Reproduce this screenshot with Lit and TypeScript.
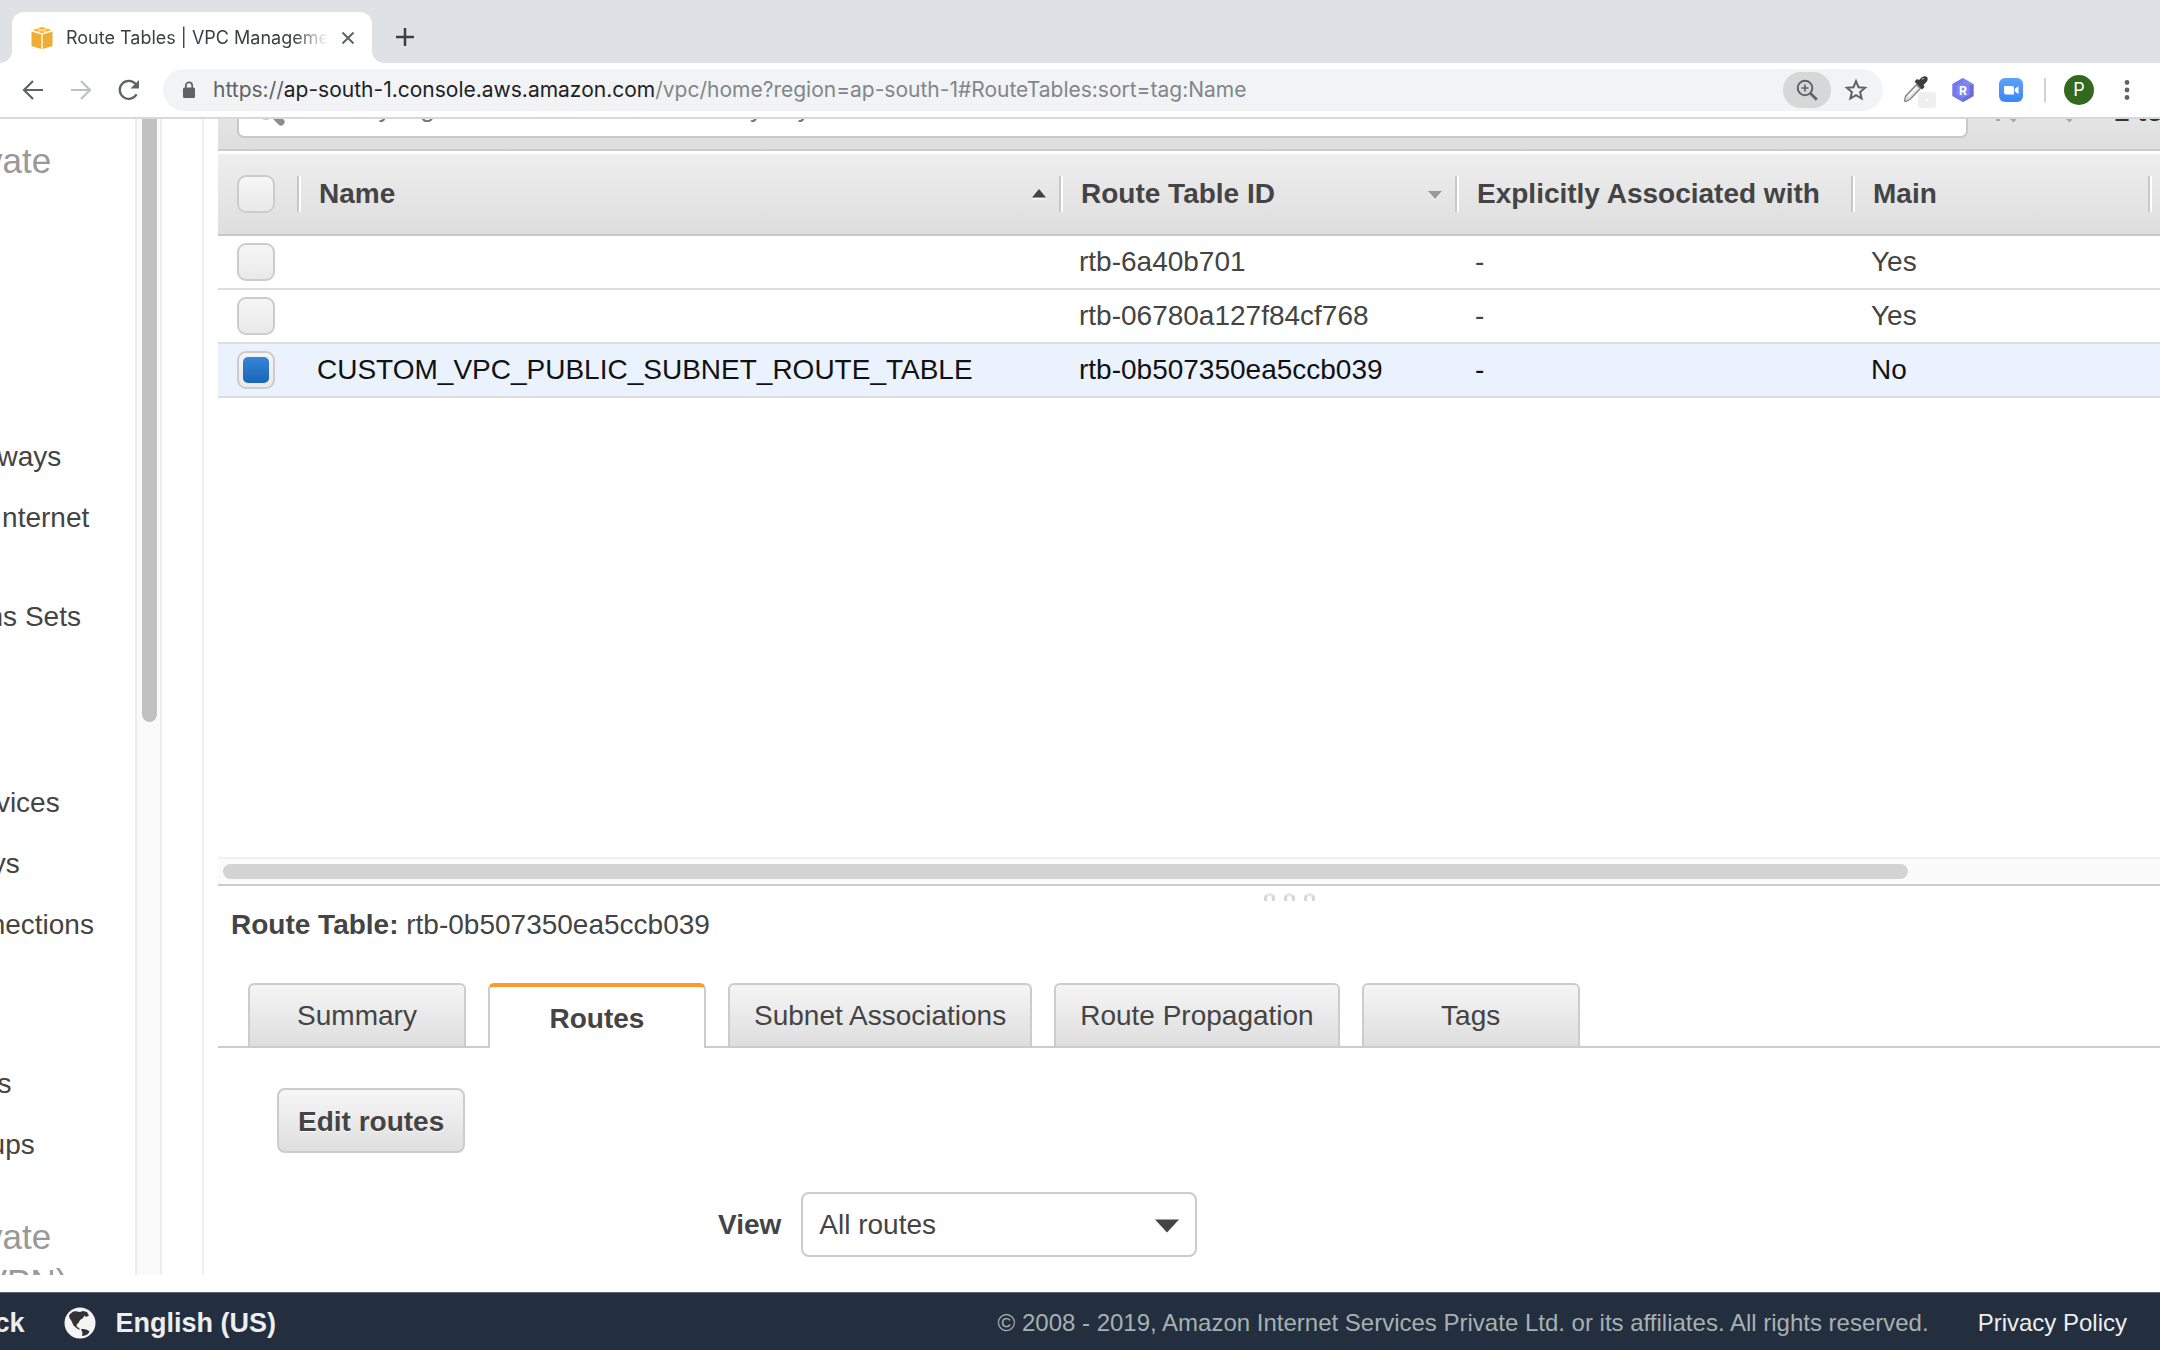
import { LitElement, html, css, svg, nothing } from "lit";
import { customElement, state } from "lit/decorators.js";
import { classMap } from "lit/directives/class-map.js";

interface RouteTable {
  name: string;
  id: string;
  associated: string;
  main: string;
}

const ROUTE_TABLES: RouteTable[] = [
  { name: "", id: "rtb-6a40b701", associated: "-", main: "Yes" },
  { name: "", id: "rtb-06780a127f84cf768", associated: "-", main: "Yes" },
  {
    name: "CUSTOM_VPC_PUBLIC_SUBNET_ROUTE_TABLE",
    id: "rtb-0b507350ea5ccb039",
    associated: "-",
    main: "No",
  },
];

const TABS = ["Summary", "Routes", "Subnet Associations", "Route Propagation", "Tags"];

@customElement("browser-bar")
export class BrowserBar extends LitElement {
  static styles = css`
    :host {
      display: block;
      flex: none;
      font-family: Inter, "Liberation Sans", sans-serif;
      color: #5f6368;
    }
    button {
      display: flex;
      align-items: center;
      justify-content: center;
      padding: 0;
      border: 0;
      background: none;
      color: inherit;
      font: inherit;
    }
    svg {
      display: block;
      flex: none;
    }
    .strip {
      display: flex;
      align-items: flex-end;
      height: 63px;
      padding-left: 12px;
      background: #dee1e6;
    }
    .tab {
      position: relative;
      display: flex;
      align-items: center;
      box-sizing: border-box;
      width: 360px;
      height: 51px;
      padding: 0 16px 0 18px;
      border-radius: 12px 12px 0 0;
      background: #fff;
    }
    .tab::before,
    .tab::after {
      content: "";
      position: absolute;
      bottom: 0;
      width: 12px;
      height: 12px;
    }
    .tab::before {
      right: 100%;
      background: radial-gradient(circle at 0 0, transparent 12px, #fff 12px);
    }
    .tab::after {
      left: 100%;
      background: radial-gradient(circle at 100% 0, transparent 12px, #fff 12px);
    }
    .title {
      flex: 1;
      min-width: 0;
      margin: 0 12px;
      overflow: hidden;
      white-space: nowrap;
      font-size: 18px;
      line-height: 24px;
      color: #3c4043;
      -webkit-mask-image: linear-gradient(to right, #000 87%, transparent);
      mask-image: linear-gradient(to right, #000 87%, transparent);
    }
    .plus {
      width: 30px;
      height: 30px;
      margin: 0 0 11px 18px;
      color: #3c4043;
    }
    .bar {
      display: flex;
      align-items: center;
      box-sizing: border-box;
      height: 56px;
      padding: 0 21px;
      border-bottom: 2px solid #d6d8da;
      background: #fff;
    }
    .nav {
      display: flex;
      gap: 24px;
      width: 142px;
    }
    .dim {
      color: #bdc0c3;
    }
    .omnibox {
      display: flex;
      flex: 1;
      align-items: center;
      min-width: 0;
      height: 42px;
      padding: 0 15px 0 20px;
      border-radius: 21px;
      background: #f1f3f4;
    }
    .url {
      flex: 1;
      min-width: 0;
      margin-left: 18px;
      overflow: hidden;
      white-space: nowrap;
      font-size: 21px;
      line-height: 28px;
      color: #80868b;
    }
    .scheme {
      color: #5f6368;
    }
    .host {
      color: #202124;
    }
    .pill {
      width: 48px;
      height: 36px;
      margin-right: 13px;
      border-radius: 18px;
      background: #d6d8d7;
    }
    .actions {
      display: flex;
      align-items: center;
      margin-left: 20px;
    }
    .dropper {
      width: 34px;
    }
    .hexagon {
      width: 22px;
      margin-left: 15px;
    }
    .camera {
      width: 26px;
      margin-left: 24px;
    }
    .rule {
      width: 2px;
      height: 24px;
      margin: 0 18px 0 20px;
      background: #d0d3d6;
    }
    .avatar {
      width: 30px;
      height: 30px;
      border-radius: 50%;
      background: #33691e;
      color: #fff;
      font-size: 18px;
      line-height: 30px;
    }
    .menu {
      width: 24px;
      margin-left: 21px;
    }
  `;

  render() {
    return html`
      <div class="strip">
        <div class="tab">
          <svg width="24" height="24" viewBox="0 0 24 24" aria-hidden="true">
            <path d="M1.500 5.500 11.300 8.500v14.500L1.500 20z" fill="#f0ad35" />
            <path d="M22.500 5.500 12.700 8.500v14.500l9.800-3z" fill="#f0ad35" />
            <path d="M12 1l9.500 3L12 7.200 2.500 4z" fill="#f7b02c" />
            <path d="M11.300 8h1.400v15h-1.400z" fill="#fde3ad" />
            <path d="M6.500 2.700l5.500 1.600 5.500-1.600M7 6l5-1.700L17 6" fill="none" stroke="#fde3ad" stroke-width="1.200" />
          </svg>
          <span class="title">Route Tables | VPC Management Console</span>
          <button aria-label="Close tab">
            <svg width="16" height="16" viewBox="0 0 16 16">
              <path d="M2.500 2.500l11 11M13.500 2.500l-11 11" stroke="#5f6368" stroke-width="2" />
            </svg>
          </button>
        </div>
        <button class="plus" aria-label="New tab">
          <svg width="20" height="20" viewBox="0 0 20 20">
            <path d="M10 1v18M1 10h18" stroke="currentColor" stroke-width="2.500" />
          </svg>
        </button>
      </div>
      <div class="bar">
        <div class="nav">
          <button aria-label="Back">
            <svg width="24" height="24" viewBox="0 0 24 24">
              <path d="M22 12H3.500M12 3L3 12l9 9" fill="none" stroke="currentColor" stroke-width="2.200" />
            </svg>
          </button>
          <button class="dim" aria-label="Forward">
            <svg width="24" height="24" viewBox="0 0 24 24">
              <path d="M2 12h18.500M12 3l9 9-9 9" fill="none" stroke="currentColor" stroke-width="2.200" />
            </svg>
          </button>
          <button aria-label="Reload">
            <svg width="24" height="24" viewBox="0 0 24 24">
              <path d="M19.600 16.200A9 9 0 1 1 18.600 6" fill="none" stroke="currentColor" stroke-width="2.300" />
              <path d="M22 2v8.500h-8.500z" fill="currentColor" />
            </svg>
          </button>
        </div>
        <div class="omnibox">
          <svg width="12" height="18" viewBox="0 0 12 18" aria-hidden="true">
            <rect y="6.500" width="12" height="10.500" rx="1.500" fill="#5f6368" />
            <path d="M2.800 7V4.500a3.200 3.200 0 0 1 6.400 0V7" fill="none" stroke="#5f6368" stroke-width="1.700" />
          </svg>
          <span class="url"
            ><span class="scheme">https://</span><span class="host">ap-south-1.console.aws.amazon.com</span
            >/vpc/home?region=ap-south-1#RouteTables:sort=tag:Name</span
          >
          <button class="pill" aria-label="Zoom">
            <svg width="24" height="24" viewBox="0 0 24 24">
              <circle cx="10" cy="10" r="7.300" fill="none" stroke="currentColor" stroke-width="2" />
              <path d="M15.300 15.300l6.500 6.500" stroke="currentColor" stroke-width="2.800" />
              <path d="M10 6.500v7M6.500 10h7" stroke="currentColor" stroke-width="1.600" />
            </svg>
          </button>
          <button aria-label="Bookmark this page">
            <svg width="24" height="24" viewBox="0 0 24 24">
              <path
                d="M12 3.200l2.500 6 6.600.600-5 4.300 1.500 6.400L12 17.100l-5.600 3.400 1.500-6.400-5-4.300 6.600-.600z"
                fill="none"
                stroke="currentColor"
                stroke-width="2"
              />
            </svg>
          </button>
        </div>
        <div class="actions">
          <button class="dropper" aria-label="Color picker">
            <svg width="34" height="36" viewBox="0 0 34 36">
              <path d="M1.500 29l1-5L13.500 12.500l4 4L7 27.500l-4.500 2z" fill="#dcdcdc" stroke="#858585" stroke-width="1.300" />
              <path d="M5.500 24.500l8.500-9" stroke="#fff" stroke-width="1.600" />
              <path
                d="M11.500 9.500l2.500-2.500 2 1 2.500-2.500c2-1.500 4.500-1.500 5.500-.500s1 3.500-1 5.500l-2.500 2.500 1 2-2.500 2.500z"
                fill="#3d3d3d"
              />
              <path d="M19 7.500l2-1.500" stroke="#9a9a9a" stroke-width="1.500" />
              <rect x="15" y="20" width="18" height="16" rx="3" fill="#efefef" />
              <circle cx="24" cy="28" r="1.300" fill="#fff" />
            </svg>
          </button>
          <button class="hexagon" aria-label="R extension">
            <svg width="22" height="26" viewBox="0 0 22 26">
              <path d="M11 1l10.500 6v12L11 25 .500 19V7z" fill="#7f86f2" />
              <path d="M11 1L.500 7v12L11 25V21L4.500 17.500v-9L11 5z" fill="#747aea" />
              <path d="M11 25l10.500-6V7l-4 1.800v8.700L11 21z" fill="#686ed8" />
              <text
                x="11"
                y="17.500"
                text-anchor="middle"
                font-family="Inter, sans-serif"
                font-size="12"
                font-weight="700"
                fill="#fff"
              >
                R
              </text>
            </svg>
          </button>
          <button class="camera" aria-label="Video meeting">
            <svg width="26" height="26" viewBox="0 0 26 26">
              <defs>
                <linearGradient id="blue" x2="0" y2="1">
                  <stop offset="0" stop-color="#5aa2fb" />
                  <stop offset="1" stop-color="#3b86f7" />
                </linearGradient>
              </defs>
              <rect x="1" y="1" width="24" height="24" rx="6" fill="url(#blue)" />
              <path d="M6.500 9h7.500a2 2 0 0 1 2 2v6.500H8a2 2 0 0 1-2-2V9z" fill="#fff" />
              <path d="M16.800 11.800l3.700-2.600v7.800l-3.700-2.600z" fill="#fff" />
            </svg>
          </button>
          <span class="rule"></span>
          <button class="avatar" aria-label="Profile">P</button>
          <button class="menu" aria-label="Browser menu">
            <svg width="24" height="24" viewBox="0 0 24 24">
              ${[4.5, 12, 19.5].map((y) => svg`<circle cx="12" cy=${y} r="2.400" fill="currentColor" />`)}
            </svg>
          </button>
        </div>
      </div>
    `;
  }
}

@customElement("side-nav")
export class SideNav extends LitElement {
  static styles = css`
    :host {
      display: flex;
      flex: none;
      width: 162px;
      overflow: hidden;
      color: #444;
    }
    nav {
      flex: none;
      width: 276px;
      margin-left: -166px;
      padding-top: 19px;
    }
    h2 {
      margin: 0;
      font-size: 35px;
      line-height: 45px;
      font-weight: 400;
      color: #999;
    }
    ul {
      margin: 0;
      padding: 0;
      list-style: none;
    }
    li {
      padding-bottom: 23px;
      font-size: 28px;
      line-height: 38px;
    }
    a {
      color: inherit;
      text-decoration: none;
    }
    .gateways {
      margin-top: 210px;
    }
    .endpoints {
      margin-top: 125px;
    }
    .security {
      margin: 98px 0 27px;
    }
    .track {
      box-sizing: border-box;
      width: 27px;
      margin-left: 25px;
      padding-left: 5px;
      border: solid #ececec;
      border-width: 0 2px;
      background: #fafafa;
    }
    .thumb {
      width: 15px;
      height: 603px;
      border-radius: 0 0 8px 8px;
      background: #c1c1c1;
    }
  `;

  private list(name: string, items: string[]) {
    return html`<ul class=${name}>
      ${items.map((item) => html`<li><a href="#">${item}</a></li>`)}
    </ul>`;
  }

  render() {
    return html`
      <nav aria-label="VPC">
        <h2>Virtual Private Cloud</h2>
        ${this.list("gateways", [
          "Internet Gateways",
          "Egress Only Internet Gateways",
          "DHCP Options Sets",
        ])}
        ${this.list("endpoints", ["Endpoint Services", "NAT Gateways", "Peering Connections"])}
        ${this.list("security", ["Network ACLs", "Security Groups"])}
        <h2>Virtual Private Network (VPN)</h2>
      </nav>
      <div class="track"><div class="thumb"></div></div>
    `;
  }
}

@customElement("route-table-list")
export class RouteTableList extends LitElement {
  static styles = css`
    :host {
      display: flex;
      flex: 1;
      flex-direction: column;
      min-height: 0;
      overflow: hidden;
    }
    .tools {
      display: flex;
      flex: none;
      align-items: flex-end;
      box-sizing: border-box;
      height: 82px;
      margin-top: -50px;
      padding: 0 0 11px 19px;
      border-bottom: 2px solid #ccc;
      background: linear-gradient(#f0f0f0, #dedede);
    }
    .search {
      display: flex;
      flex: none;
      align-items: center;
      box-sizing: border-box;
      width: 90%;
      height: 56px;
      padding: 0 18px 4px;
      border: 2px solid #c8c8c8;
      border-radius: 7px;
      background: #fff;
    }
    .search input {
      flex: 1;
      margin-left: 14px;
      padding: 0;
      border: 0;
      outline: 0;
      background: none;
      color: #444;
      font: inherit;
      font-size: 26px;
      line-height: 36px;
    }
    .search input::placeholder {
      color: #777;
    }
    .pager {
      display: flex;
      flex: none;
      align-items: center;
      gap: 36px;
      height: 52px;
      margin-left: 26px;
      white-space: nowrap;
      font-weight: 700;
      color: #333;
    }
    .pager button {
      width: 24px;
      padding: 0;
      border: 0;
      background: none;
    }
    svg {
      display: block;
      flex: none;
    }
    table {
      width: 100%;
      border-collapse: separate;
      border-spacing: 0;
      table-layout: fixed;
      line-height: 36px;
    }
    .c-check {
      width: 79px;
    }
    .c-mid {
      width: 396px;
    }
    .c-main {
      width: 297px;
    }
    .c-rest {
      width: 12px;
    }
    th {
      box-sizing: border-box;
      height: 85px;
      padding: 0;
      border-top: 3px solid #fff;
      border-bottom: 2px solid #c8c8c8;
      background: linear-gradient(#eeeeee, #dedede);
      text-align: left;
      white-space: nowrap;
    }
    .head {
      display: flex;
      align-items: center;
      justify-content: space-between;
      height: 36px;
      padding: 0 13px 0 20px;
      border-left: 2px solid #c8c8c8;
      box-shadow: inset 2px 0 #fff;
    }
    td {
      box-sizing: border-box;
      height: 54px;
      padding: 0 0 0 20px;
      border-bottom: 2px solid #ddd;
      white-space: nowrap;
    }
    .check {
      padding-left: 19px;
    }
    .selected td {
      background: #eaf2fe;
      color: #111;
    }
    input[type="checkbox"] {
      appearance: none;
      display: grid;
      place-items: center;
      box-sizing: border-box;
      width: 38px;
      height: 38px;
      margin: 0;
      border: 2px solid #ccc;
      border-radius: 9px;
      background: linear-gradient(#f6f6f6, #e9e9e9);
    }
    input[type="checkbox"]:checked::before {
      content: "";
      width: 26px;
      height: 26px;
      border-radius: 5px;
      background: linear-gradient(#3585d8, #1b65b8);
    }
    .space {
      flex: 1;
    }
    .track {
      box-sizing: border-box;
      flex: none;
      height: 29px;
      padding: 5px 0 0 5px;
      border-top: 2px solid #f0f0f0;
      border-bottom: 2px solid #ccc;
      background: #fbfbfb;
    }
    .thumb {
      width: 87%;
      height: 15px;
      border-radius: 8px;
      background: #d3d3d3;
    }
  `;

  @state() private selected = 2;

  private head(label: string, arrow?: "up" | "down") {
    return html`<th scope="col">
      <div class="head">
        <span>${label}</span>
        ${arrow === "up"
          ? html`<svg width="14" height="12" viewBox="0 0 14 12" aria-hidden="true">
              <path d="M0 9.500h14v2H0z" fill="#f6f6f6" />
              <path d="M7 1l7 8.500H0z" fill="#444" />
            </svg>`
          : arrow === "down"
            ? html`<svg width="14" height="12" viewBox="0 0 14 12" aria-hidden="true">
                <path d="M0 4.500h14L7 12z" fill="#f6f6f6" />
                <path d="M0 3h14l-7 8z" fill="#999" />
              </svg>`
            : nothing}
      </div>
    </th>`;
  }

  render() {
    return html`
      <div class="tools">
        <div class="search">
          <svg width="28" height="36" viewBox="0 0 28 36" aria-hidden="true">
            <circle cx="9" cy="17" r="10" fill="none" stroke="#999" stroke-width="5" />
            <path d="M16 24l8 8" stroke="#8c8c8c" stroke-width="7" stroke-linecap="round" />
          </svg>
          <input
            type="text"
            aria-label="Filter route tables"
            placeholder="Filter by tags and attributes or search by keyword"
          />
        </div>
        <div class="pager">
          <button aria-label="First page">
            <svg width="24" height="24" viewBox="0 0 24 24">
              <path d="M4 0v21M21 0L9 10l12 11" fill="none" stroke="#aaa" stroke-width="4" />
            </svg>
          </button>
          <button aria-label="Previous page">
            <svg width="24" height="24" viewBox="0 0 24 24">
              <path d="M17 0L5 10l12 11" fill="none" stroke="#aaa" stroke-width="4" />
            </svg>
          </button>
          <span>1 to 3 of 3</span>
        </div>
      </div>
      <table>
        <colgroup>
          <col class="c-check" />
          <col />
          <col class="c-mid" />
          <col class="c-mid" />
          <col class="c-main" />
          <col class="c-rest" />
        </colgroup>
        <thead>
          <tr>
            <th class="check" scope="col"><input type="checkbox" aria-label="Select all" /></th>
            ${this.head("Name", "up")} ${this.head("Route Table ID", "down")}
            ${this.head("Explicitly Associated with")} ${this.head("Main")} ${this.head("")}
          </tr>
        </thead>
        <tbody>
          ${ROUTE_TABLES.map(
            (row, i) => html`<tr class=${classMap({ selected: i === this.selected })}>
              <td class="check">
                <input
                  type="checkbox"
                  aria-label=${row.id}
                  .checked=${i === this.selected}
                  @change=${() => (this.selected = i)}
                />
              </td>
              <td>${row.name}</td>
              <td>${row.id}</td>
              <td>${row.associated}</td>
              <td>${row.main}</td>
              <td></td>
            </tr>`,
          )}
        </tbody>
      </table>
      <div class="space"></div>
      <div class="track"><div class="thumb"></div></div>
    `;
  }
}

@customElement("route-table-detail")
export class RouteTableDetail extends LitElement {
  static styles = css`
    :host {
      display: block;
      flex: none;
      padding-bottom: 18px;
    }
    .grip {
      display: flex;
      justify-content: center;
      gap: 9px;
      height: 8px;
      padding: 7px 0 0 200px;
      overflow: hidden;
    }
    .dot {
      box-sizing: border-box;
      width: 11px;
      height: 12px;
      border: 3px solid #d6d6d6;
      border-top-color: #e6e6e6;
      border-radius: 6px;
    }
    h3 {
      margin: 6px 0 0 13px;
      font-size: 28px;
      line-height: 36px;
      font-weight: 700;
    }
    .id {
      font-weight: 400;
    }
    .tabs {
      display: flex;
      gap: 22px;
      height: 65px;
      margin-top: 40px;
      padding-left: 30px;
      box-shadow: inset 0 -2px #ccc;
    }
    .tab {
      box-sizing: border-box;
      min-width: 218px;
      padding: 0 24px;
      border: 2px solid #ccc;
      border-radius: 6px 6px 0 0;
      background: linear-gradient(#f5f5f5, #dedede);
      color: #444;
      font: inherit;
    }
    .active {
      padding-top: 2px;
      border-top: 4px solid #ff9a2e;
      border-bottom: 0;
      background: #fff;
      font-weight: 700;
    }
    .body {
      padding: 40px 59px 0;
    }
    .edit {
      display: block;
      box-sizing: border-box;
      height: 65px;
      padding: 2px 19px 0;
      border: 2px solid #ccc;
      border-radius: 8px;
      background: linear-gradient(#f6f6f6, #dfdfdf);
      color: #444;
      font: inherit;
      font-weight: 700;
      text-shadow: 0 1px #fff;
    }
    .view {
      display: flex;
      align-items: center;
      gap: 20px;
      margin: 39px 0 0 441px;
      font-weight: 700;
    }
    .select {
      position: relative;
    }
    select {
      appearance: none;
      display: block;
      box-sizing: border-box;
      width: 396px;
      height: 65px;
      padding: 0 16px;
      border: 2px solid #ccc;
      border-radius: 8px;
      background: #fff;
      color: #444;
      font: inherit;
      font-weight: 400;
    }
    .arrow {
      position: absolute;
      top: 27px;
      right: 18px;
      pointer-events: none;
    }
  `;

  @state() private active = "Routes";

  render() {
    return html`
      <div class="grip"><i class="dot"></i><i class="dot"></i><i class="dot"></i></div>
      <h3>Route Table: <span class="id">rtb-0b507350ea5ccb039</span></h3>
      <div class="tabs" role="tablist">
        ${TABS.map(
          (tab) => html`<button
            role="tab"
            class=${classMap({ tab: true, active: tab === this.active })}
            aria-selected=${tab === this.active ? "true" : "false"}
            @click=${() => (this.active = tab)}
          >
            ${tab}
          </button>`,
        )}
      </div>
      <div class="body">
        <button class="edit">Edit routes</button>
        <div class="view">
          <label for="view">View</label>
          <div class="select">
            <select id="view">
              <option>All routes</option>
            </select>
            <svg class="arrow" width="24" height="14" viewBox="0 0 24 14" aria-hidden="true">
              <path d="M0 .500h24L12 13.500z" fill="#444" />
            </svg>
          </div>
        </div>
      </div>
    `;
  }
}

@customElement("app-root")
export class AppRoot extends LitElement {
  static styles = css`
    :host {
      display: flex;
      flex-direction: column;
      height: 100vh;
      overflow: hidden;
      background: #fff;
      color: #444;
      font-family: "Liberation Sans", Arial, sans-serif;
      font-size: 28px;
      line-height: 36px;
    }
    .console {
      display: flex;
      flex: 1;
      min-height: 0;
      margin-bottom: 17px;
    }
    main {
      display: flex;
      flex: 1;
      flex-direction: column;
      min-width: 0;
      margin-left: 40px;
      padding-left: 14px;
      border-left: 2px solid #efefef;
      overflow: hidden;
    }
    footer {
      display: flex;
      flex: none;
      align-items: center;
      box-sizing: border-box;
      height: 58px;
      padding: 2px 33px 0 0;
      border-top: 1px solid #5d6672;
      background: #232f3e;
      color: #eee;
      white-space: nowrap;
    }
    footer a {
      color: inherit;
      text-decoration: none;
    }
    footer button {
      padding: 0;
      border: 0;
      background: none;
      color: inherit;
      font: inherit;
    }
    .left {
      display: flex;
      align-items: center;
      margin-left: -100px;
      font-size: 27px;
      font-weight: 700;
    }
    .globe {
      margin: 0 20px 0 39px;
    }
    .right {
      display: flex;
      gap: 49px;
      margin-left: auto;
      font-size: 24px;
    }
    .copy {
      color: #a6b1b1;
    }
  `;

  render() {
    return html`
      <browser-bar></browser-bar>
      <div class="console">
        <side-nav></side-nav>
        <main>
          <route-table-list></route-table-list>
          <route-table-detail></route-table-detail>
        </main>
      </div>
      <footer>
        <div class="left">
          <a href="#">Feedback</a>
          <svg class="globe" width="32" height="32" viewBox="0 0 32 32" aria-hidden="true">
            <circle cx="16" cy="16" r="15.500" fill="#f4f4f4" />
            <path
              d="M5 8.500C7 5.500 10 3.500 13 4.500l3 .500 3-1 4 1 2 3.500-3 1.500-1.500-1.500-1.500 2.500-3 2-1.500 3-1.500 1-.500 2.500 2.500 1.500 1 2-3-1.500-3.500-3-2-4.500L5.500 11z"
              fill="#333"
            />
            <path d="M17 22l3 0 3.500 1 2 1.500-1.500 2.500-3 1.500-3 .500.500-3z" fill="#333" />
          </svg>
          <button>English (US)</button>
        </div>
        <div class="right">
          <span class="copy"
            >© 2008 - 2019, Amazon Internet Services Private Ltd. or its affiliates. All rights reserved.</span
          >
          <a href="#">Privacy Policy</a>
        </div>
      </footer>
    `;
  }
}
